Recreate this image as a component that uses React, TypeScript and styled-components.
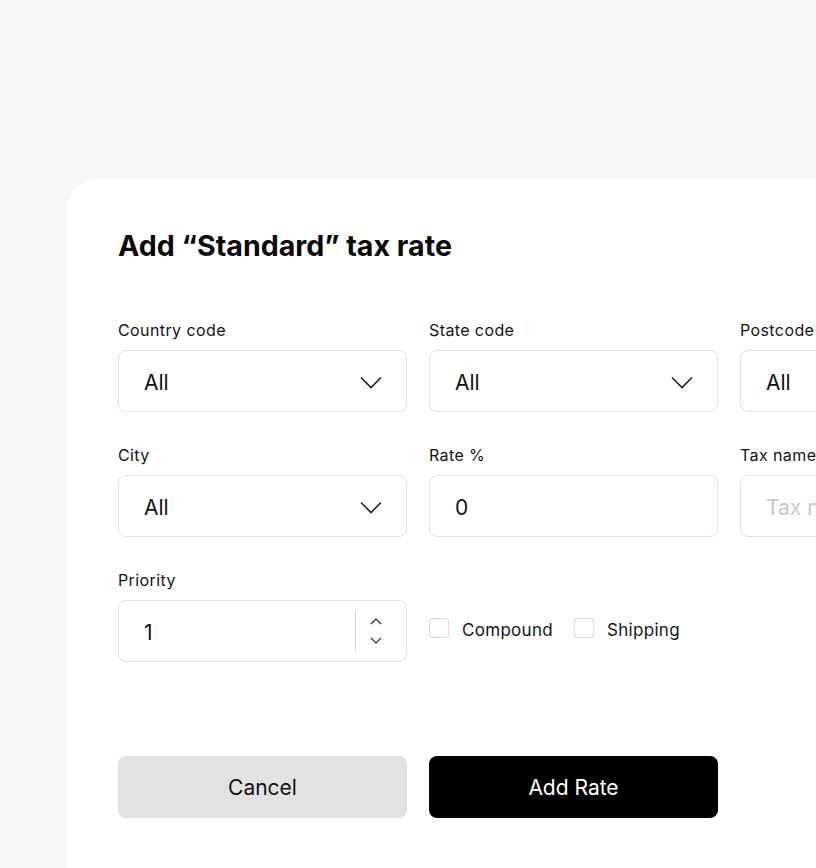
import React from 'react';
import styled, { createGlobalStyle } from 'styled-components';

const GlobalStyle = createGlobalStyle`
  html, body {
    margin: 0;
    padding: 0;
    background: #f8f8f8;
    overflow: hidden;
  }
  body {
    font-family: 'Inter', 'Liberation Sans', sans-serif;
    color: #111;
  }
`;

const Page = styled.div`
  width: 816px;
  height: 868px;
  padding: 179px 0 0 66px;
  box-sizing: border-box;
  overflow: hidden;
`;

const Card = styled.div`
  width: 1015px;
  min-height: 760px;
  background: #fff;
  border-radius: 32px;
  padding: 50px 52px 40px;
  box-sizing: border-box;
`;

const Title = styled.h1`
  margin: 0 0 57px;
  font-family: 'Inter', sans-serif;
  font-size: 28.6px;
  line-height: 34px;
  font-weight: 700;
  letter-spacing: 0;
  color: #0a0a0a;
`;

const Grid = styled.div`
  display: grid;
  grid-template-columns: repeat(3, 289px);
  column-gap: 22px;
  row-gap: 33px;
`;

const Field = styled.div`
  display: flex;
  flex-direction: column;
`;

const Label = styled.label`
  font-family: 'Inter', sans-serif;
  font-size: 16px;
  line-height: 20px;
  letter-spacing: 0.4px;
  margin-bottom: 10px;
  color: #141414;
  white-space: nowrap;
`;

const Box = styled.div<{ $muted?: boolean }>`
  height: 62px;
  box-sizing: border-box;
  border: 1px solid #e3e3e3;
  border-radius: 8px;
  display: flex;
  align-items: center;
  padding: 2px 24px 0 25px;
  font-size: 21px;
  white-space: nowrap;
  overflow: hidden;
  color: ${(p) => (p.$muted ? '#c9c9c9' : '#111')};
`;

const Value = styled.span`
  flex: 1;
`;

const Stepper = styled.div`
  align-self: stretch;
  display: flex;
  flex-direction: column;
  justify-content: center;
  gap: 12px;
  padding: 0 0 0 14px;
  margin: 8px 0 10px 0;
  border-left: 1px solid #d6d6d6;
`;

const Checks = styled.div`
  display: flex;
  align-items: center;
  gap: 21px;
  padding-top: 28px;
`;

const Check = styled.label`
  display: flex;
  align-items: center;
  gap: 13px;
  font-family: 'Inter', sans-serif;
  font-size: 17px;
  letter-spacing: 0.3px;
  color: #141414;
`;

const CheckBox = styled.span`
  width: 20px;
  height: 20px;
  box-sizing: border-box;
  border: 1px solid #dcdcdc;
  border-radius: 3px;
  margin-top: -4px;
`;

const Actions = styled.div`
  display: grid;
  grid-template-columns: repeat(2, 289px);
  column-gap: 22px;
  margin-top: 94px;
`;

const Button = styled.button<{ $primary?: boolean }>`
  height: 62px;
  border: none;
  border-radius: 8px;
  font-family: 'Inter', sans-serif;
  font-size: 21px;
  padding-top: 2px;
  background: ${(p) => (p.$primary ? '#000' : '#e2e2e2')};
  color: ${(p) => (p.$primary ? '#fff' : '#111')};
  cursor: pointer;
`;

const Chevron = () => (
  <svg width="22" height="13" viewBox="0 0 22 13" fill="none">
    <path d="M1 1.5l10 10 10-10" stroke="#222" strokeWidth="1.6" />
  </svg>
);

const Small = ({ up }: { up?: boolean }) => (
  <svg width="12" height="7" viewBox="0 0 12 7" fill="none">
    <path d={up ? 'M1 6l5-5 5 5' : 'M1 1l5 5 5-5'} stroke="#333" strokeWidth="1.2" />
  </svg>
);

const SelectField = ({ label, value }: { label: string; value: string }) => (
  <Field>
    <Label>{label}</Label>
    <Box>
      <Value>{value}</Value>
      <Chevron />
    </Box>
  </Field>
);

const App: React.FC = () => {
  return (
    <>
      <GlobalStyle />
      <Page>
        <Card>
          <Title>Add “Standard” tax rate</Title>
          <Grid>
            <SelectField label="Country code" value="All" />
            <SelectField label="State code" value="All" />
            <Field>
              <Label>Postcode</Label>
              <Box>
                <Value>All</Value>
              </Box>
            </Field>
            <SelectField label="City" value="All" />
            <Field>
              <Label>Rate %</Label>
              <Box>
                <Value>0</Value>
              </Box>
            </Field>
            <Field>
              <Label>Tax name</Label>
              <Box $muted>
                <Value>Tax name</Value>
              </Box>
            </Field>
            <Field>
              <Label>Priority</Label>
              <Box>
                <Value>1</Value>
                <Stepper>
                  <Small up />
                  <Small />
                </Stepper>
              </Box>
            </Field>
            <Checks>
              <Check>
                <CheckBox />
                Compound
              </Check>
              <Check>
                <CheckBox />
                Shipping
              </Check>
            </Checks>
          </Grid>
          <Actions>
            <Button>Cancel</Button>
            <Button $primary>Add Rate</Button>
          </Actions>
        </Card>
      </Page>
    </>
  );
};

export default App;
